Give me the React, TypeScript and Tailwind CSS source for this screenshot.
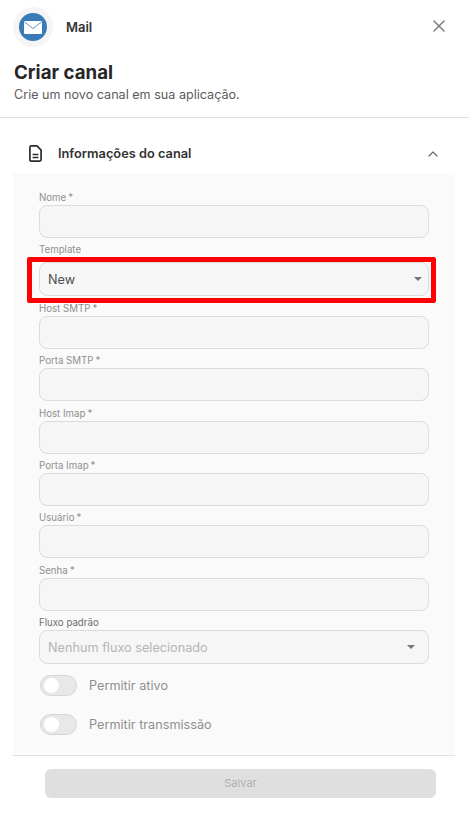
import React from 'react';
import { ChevronUp, X } from 'lucide-react';

const font = "[font-family:Inter,'Liberation_Sans',sans-serif]";

const Label: React.FC<{ name: string; required?: boolean; dark?: boolean }> = ({ name, required, dark }) => (
  <label className={`h-[14px] text-[9.7px] leading-[15px] ${dark ? 'text-[#6e6e6e]' : 'text-[#8f8f8f]'}`}>
    {name}
    {required && <span className="ml-[2px]">*</span>}
  </label>
);

const Field: React.FC<{ label: string }> = ({ label }) => (
  <div className="flex flex-col">
    <Label name={label} required />
    <div className="mt-px h-[33px] rounded-lg border border-[#dcdcdc] bg-[#f6f6f6]" />
  </div>
);

const Caret: React.FC = () => (
  <span className="h-0 w-0 border-x-[4px] border-t-[4px] border-x-transparent border-t-[#757575]" />
);

const Toggle: React.FC<{ label: string }> = ({ label }) => (
  <div className="flex h-[21px] items-center gap-3 pl-px">
    <div className="flex h-[21px] w-[37px] items-center rounded-full border border-[#d5d5d5] bg-[#e8e8e8] pl-[3px]">
      <span className="h-[15px] w-[15px] rounded-full bg-white" />
    </div>
    <span className="text-[12.7px] text-[#8f8f8f]">{label}</span>
  </div>
);

export default function App() {
  return (
    <div className={`${font} relative h-[818px] w-[469px] overflow-hidden bg-white`}>
      {/* Top bar */}
      <div className="flex h-[54px] items-start pl-[13px] pr-[20px] pt-[7px]">
        <div className="flex h-10 w-10 items-center justify-center rounded-full bg-[#f5f5f5]">
          <div className="flex h-[28px] w-[28px] items-center justify-center rounded-full bg-[#3b7ab8]">
            <svg width="18" height="13" viewBox="0 0 18 13">
              <rect width="18" height="13" rx="1" fill="#ffffff" />
              <path d="M0.5 1 L9 7.5 L17.5 1" fill="none" stroke="#3b7ab8" strokeWidth="0.8" />
            </svg>
          </div>
        </div>
        <span className="ml-[13px] mt-[11px] text-[13px] font-semibold leading-[18px] text-[#333333]">Mail</span>
        <X className="ml-auto mt-[9px] h-[20px] w-[20px] text-[#7a7a7a]" strokeWidth={1.8} />
      </div>

      {/* Title */}
      <div className="h-[64px] border-b border-[#dedede] pl-[14px] pt-[8px]">
        <h1 className="text-[18.7px] font-bold leading-[22px] text-[#262626]">Criar canal</h1>
        <p className="mt-[2px] text-[12.6px] leading-[18px] text-[#5c5c5c]">Crie um novo canal em sua aplicação.</p>
      </div>

      {/* Section header */}
      <div className="flex h-[55px] items-center pl-[29px] pr-[28px] pt-[16px]">
        <svg width="13" height="17" viewBox="0 0 13 17" fill="none" stroke="#2b2b2b" strokeWidth="1.7">
          <path d="M2.2 0.9 H8 L12.1 5.2 V14.6 Q12.1 16.1 10.6 16.1 H2.2 Q0.9 16.1 0.9 14.6 V2.4 Q0.9 0.9 2.2 0.9 Z" strokeLinejoin="round" />
          <path d="M3.6 9.4 H9.4 M3.6 12.4 H9.4" strokeWidth="1.5" />
        </svg>
        <span className="ml-[16px] text-[12.8px] font-semibold text-[#333333]">Informações do canal</span>
        <ChevronUp className="ml-auto h-[16px] w-[16px] text-[#6b6b6b]" strokeWidth={1.8} />
      </div>

      {/* Form panel */}
      <div className="ml-[13px] h-[583px] w-[442px] border-b border-[#e2e2e2] bg-[#fafafa] px-[26px] pt-[17px]">
        <div className="flex flex-col gap-[4.4px]">
          <Field label="Nome" />
          <div className="flex flex-col">
            <Label name="Template" />
            <div className="mt-[6px] flex h-[34px] items-center justify-between rounded-lg border border-[#dcdcdc] bg-[#f6f6f6] pl-2 pr-[6px]">
              <span className="text-[12.7px] text-[#4d4d4d]">New</span>
              <Caret />
            </div>
          </div>
          <Field label="Host SMTP" />
          <Field label="Porta SMTP" />
          <Field label="Host Imap" />
          <Field label="Porta Imap" />
          <Field label="Usuário" />
          <Field label="Senha" />
          <div className="flex flex-col">
            <Label name="Fluxo padrão" dark />
            <div className="mt-px flex h-[34px] items-center justify-between rounded-lg border border-[#dcdcdc] bg-[#f6f6f6] pl-2 pr-[13px]">
              <span className="text-[12.7px] text-[#b5b5b5]">Nenhum fluxo selecionado</span>
              <Caret />
            </div>
          </div>
        </div>
        <div className="mt-[11px] flex flex-col gap-[18px]">
          <Toggle label="Permitir ativo" />
          <Toggle label="Permitir transmissão" />
        </div>
      </div>

      {/* Footer */}
      <div className="ml-[45px] mt-[13px] flex h-[29px] w-[391px] items-center justify-center rounded-md bg-[#dfdfdf] text-[11px] text-[#b0b0b0]">
        Salvar
      </div>

      {/* Red highlight annotation */}
      <div className="absolute left-[27px] top-[257px] h-[46px] w-[409px] rounded-[2px] border-[5px] border-[#ff0000]" />
    </div>
  );
}
